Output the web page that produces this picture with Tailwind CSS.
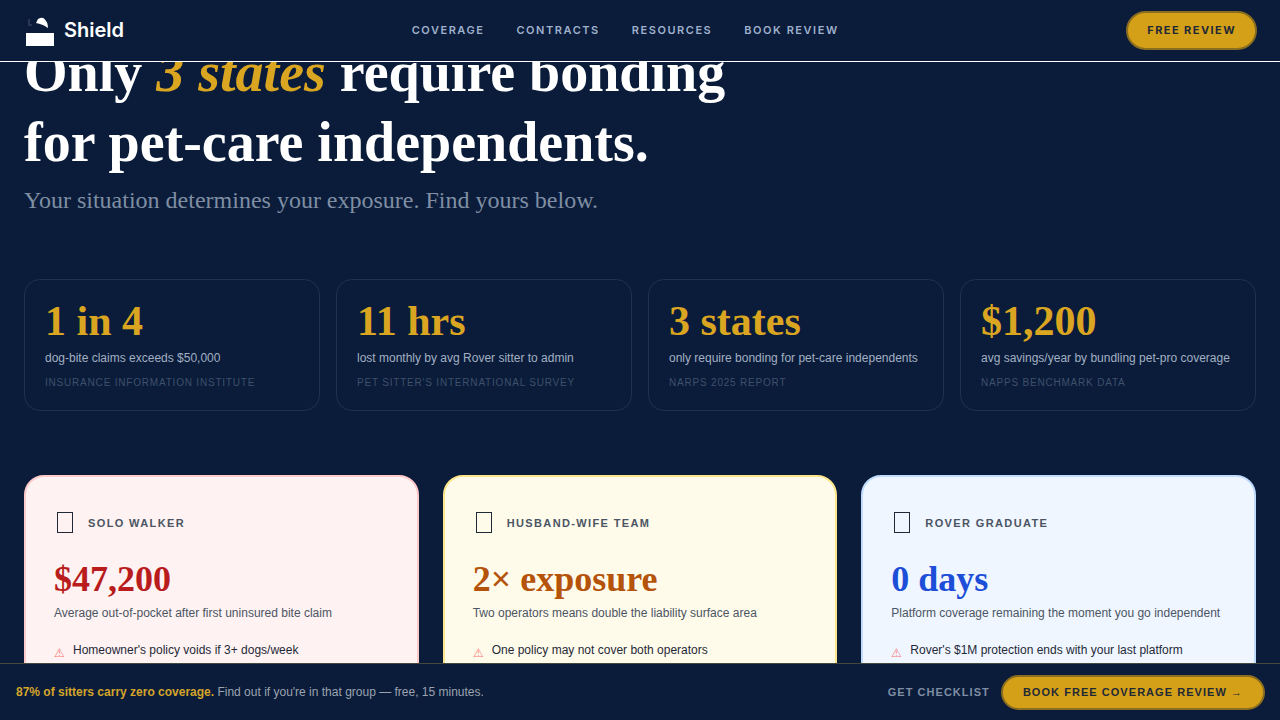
<!DOCTYPE html>
<html lang="en">
<head>
    <meta charset="UTF-8">
    <meta name="viewport" content="width=device-width, initial-scale=1.0">
    <title>Shield</title>
    <script src="https://cdn.jsdelivr.net/npm/@tailwindcss/browser@4"></script>
</head>
<body class="bg-[#0a1c3a] h-screen overflow-hidden font-['Liberation_Sans',Arial,sans-serif]">
    <header class="fixed top-0 inset-x-0 z-20 h-[62px] bg-[#0a1c3a] border-b border-white flex items-center justify-between pl-6 pr-[23px]">
        <div class="flex items-center gap-[10px]">
            <svg class="w-[30px] h-[31px]" viewBox="0 0 30 31">
                <path d="M12 8 L14 4 Q18 2 20 3.5 Q24 7 24 13 Q20 10 16 9 Z" fill="#fff"/>
                <rect x="2" y="18" width="28" height="13" fill="#fff"/>
                <path d="M5 4v6h3" fill="none" stroke="#33415c" stroke-width="1.5"/>
            </svg>
            <span class="text-[20px] font-semibold text-white font-['Inter',sans-serif] mb-[2px]">Shield</span>
        </div>
        <nav class="flex items-center gap-8 text-[11px] font-semibold tracking-[0.14em] text-[#9fb0cc] font-['Inter',sans-serif]">
            <a>COVERAGE</a>
            <a>CONTRACTS</a>
            <a>RESOURCES</a>
            <a>BOOK REVIEW</a>
        </nav>
        <a class="h-[39px] px-[19px] flex items-center rounded-full bg-[#d4a017] border-2 border-[#8a6d1f] text-[11px] font-bold tracking-[0.13em] text-[#1f2937] font-['Inter',sans-serif]">FREE REVIEW</a>
    </header>

    <main class="px-6 pt-[37px]">
        <h1 class="font-['Liberation_Serif',serif] text-[56px] leading-[70px] font-bold text-white">
            Only <em class="text-[#daa520]">3 states</em> require bonding<br>for pet-care independents.
        </h1>
        <p class="font-['Liberation_Serif',serif] text-[24px] leading-[36px] text-[#7f8ea3] mt-[5px]">Your situation determines your exposure. Find yours below.</p>

        <section class="grid grid-cols-4 gap-4 mt-[61px]">
            <div class="h-[132px] rounded-2xl border border-[#1e3150] px-5 pt-[17px]">
                <div class="font-['Liberation_Serif',serif] text-[42px] leading-[48px] font-bold text-[#daa520]">1 in 4</div>
                <p class="text-xs leading-4 text-[#a3b0c2] mt-[5px]">dog-bite claims exceeds $50,000</p>
                <p class="text-[10px] leading-4 tracking-[0.08em] text-[#3f506b] mt-[9px]">INSURANCE INFORMATION INSTITUTE</p>
            </div>
            <div class="h-[132px] rounded-2xl border border-[#1e3150] px-5 pt-[17px]">
                <div class="font-['Liberation_Serif',serif] text-[42px] leading-[48px] font-bold text-[#daa520]">11 hrs</div>
                <p class="text-xs leading-4 text-[#a3b0c2] mt-[5px]">lost monthly by avg Rover sitter to admin</p>
                <p class="text-[10px] leading-4 tracking-[0.08em] text-[#3f506b] mt-[9px]">PET SITTER'S INTERNATIONAL SURVEY</p>
            </div>
            <div class="h-[132px] rounded-2xl border border-[#1e3150] px-5 pt-[17px]">
                <div class="font-['Liberation_Serif',serif] text-[42px] leading-[48px] font-bold text-[#daa520]">3 states</div>
                <p class="text-xs leading-4 text-[#a3b0c2] mt-[5px]">only require bonding for pet-care independents</p>
                <p class="text-[10px] leading-4 tracking-[0.08em] text-[#3f506b] mt-[9px]">NARPS 2025 REPORT</p>
            </div>
            <div class="h-[132px] rounded-2xl border border-[#1e3150] px-5 pt-[17px]">
                <div class="font-['Liberation_Serif',serif] text-[42px] leading-[48px] font-bold text-[#daa520]">$1,200</div>
                <p class="text-xs leading-4 text-[#a3b0c2] mt-[5px]">avg savings/year by bundling pet-pro coverage</p>
                <p class="text-[10px] leading-4 tracking-[0.08em] text-[#3f506b] mt-[9px]">NAPPS BENCHMARK DATA</p>
            </div>
        </section>

        <section class="grid grid-cols-3 gap-6 mt-16">
            <div class="h-[300px] rounded-[20px] border-2 border-[#fecaca] bg-[#fef2f2] px-7 pt-[34px]">
                <div class="flex items-center gap-[15px] h-6">
                    <span class="w-[16px] h-[21px] ml-[3px] mb-[2px] border border-[#1f2937]"></span>
                    <span class="text-[11px] font-bold tracking-[0.125em] text-[#4b5563]">SOLO WALKER</span>
                </div>
                <div class="font-['Liberation_Serif',serif] text-[36px] leading-[44px] font-bold text-[#b91c1c] mt-[22px]">$47,200</div>
                <p class="text-xs leading-[18px] text-[#4b5563] mt-[3px]">Average out-of-pocket after first uninsured bite claim</p>
                <div class="flex items-start gap-2 mt-[19px] text-xs leading-[18px] text-[#1f2937]">
                    <span class="text-[12px] text-[#f87171] mt-[3px]">⚠</span>Homeowner's policy voids if 3+ dogs/week
                </div>
            </div>
            <div class="h-[300px] rounded-[20px] border-2 border-[#fde68a] bg-[#fffbeb] px-7 pt-[34px]">
                <div class="flex items-center gap-[15px] h-6">
                    <span class="w-[16px] h-[21px] ml-[3px] mb-[2px] border border-[#1f2937]"></span>
                    <span class="text-[11px] font-bold tracking-[0.125em] text-[#4b5563]">HUSBAND-WIFE TEAM</span>
                </div>
                <div class="font-['Liberation_Serif',serif] text-[36px] leading-[44px] font-bold text-[#b45309] mt-[22px]">2× exposure</div>
                <p class="text-xs leading-[18px] text-[#4b5563] mt-[3px]">Two operators means double the liability surface area</p>
                <div class="flex items-start gap-2 mt-[19px] text-xs leading-[18px] text-[#1f2937]">
                    <span class="text-[12px] text-[#f87171] mt-[3px]">⚠</span>One policy may not cover both operators
                </div>
            </div>
            <div class="h-[300px] rounded-[20px] border-2 border-[#bfdbfe] bg-[#eff6ff] px-7 pt-[34px]">
                <div class="flex items-center gap-[15px] h-6">
                    <span class="w-[16px] h-[21px] ml-[3px] mb-[2px] border border-[#1f2937]"></span>
                    <span class="text-[11px] font-bold tracking-[0.125em] text-[#4b5563]">ROVER GRADUATE</span>
                </div>
                <div class="font-['Liberation_Serif',serif] text-[36px] leading-[44px] font-bold text-[#1d4ed8] mt-[22px]">0 days</div>
                <p class="text-xs leading-[18px] text-[#4b5563] mt-[3px]">Platform coverage remaining the moment you go independent</p>
                <div class="flex items-start gap-2 mt-[19px] text-xs leading-[18px] text-[#1f2937]">
                    <span class="text-[12px] text-[#f87171] mt-[3px]">⚠</span>Rover's $1M protection ends with your last platform
                </div>
            </div>
        </section>
    </main>

    <footer class="fixed bottom-0 inset-x-0 z-20 h-[57px] bg-[#0a1c3a] border-t border-[#44493f] flex items-center justify-between pl-4 pr-[15px]">
        <p class="text-xs text-[#9ca3af]"><strong class="text-[#d4a52a]">87% of sitters carry zero coverage.</strong> Find out if you're in that group — free, 15 minutes.</p>
        <div class="flex items-center gap-[11px]">
            <a class="text-[11px] font-bold tracking-[0.095em] text-[#7f8ea3]">GET CHECKLIST</a>
            <a class="h-[35px] px-5 flex items-center rounded-full bg-[#d4a017] border-2 border-[#8a6d1f] text-[11px] font-bold tracking-[0.095em] text-[#1f2937]">BOOK FREE COVERAGE REVIEW →</a>
        </div>
    </footer>
</body>
</html>
